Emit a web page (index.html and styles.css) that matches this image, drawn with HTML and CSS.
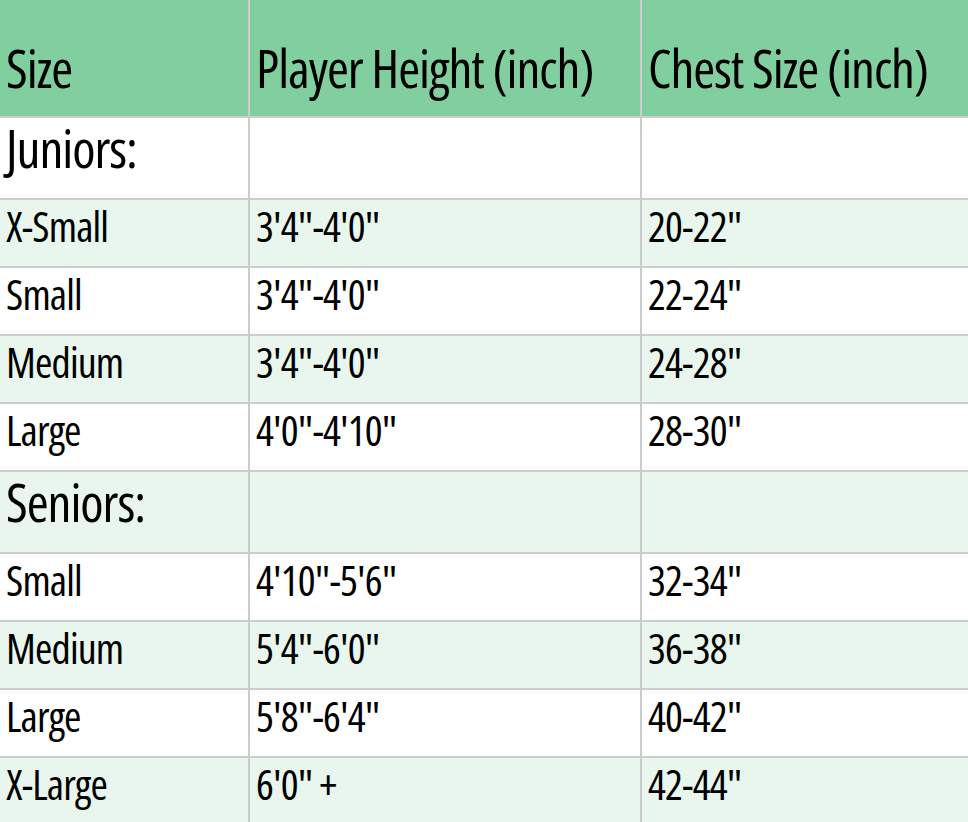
FILE: index.html
```html
<!DOCTYPE html>
<html>
<head>
<meta charset="utf-8">
<link rel="stylesheet" href="styles.css">
</head>
<body>
<div class="sheet">
  <div class="row head">
    <div class="cell"><span class="t">Size</span></div>
    <div class="cell"><span class="t">Player Height (inch)</span></div>
    <div class="cell"><span class="t">Chest Size (inch)</span></div>
  </div>
  <div class="row group">
    <div class="cell"><span class="t">Juniors:</span></div>
    <div class="cell"></div>
    <div class="cell"></div>
  </div>
  <div class="row data alt">
    <div class="cell"><span class="t">X-Small</span></div>
    <div class="cell"><span class="t">3'4"-4'0"</span></div>
    <div class="cell"><span class="t">20-22"</span></div>
  </div>
  <div class="row data">
    <div class="cell"><span class="t">Small</span></div>
    <div class="cell"><span class="t">3'4"-4'0"</span></div>
    <div class="cell"><span class="t">22-24"</span></div>
  </div>
  <div class="row data alt">
    <div class="cell"><span class="t">Medium</span></div>
    <div class="cell"><span class="t">3'4"-4'0"</span></div>
    <div class="cell"><span class="t">24-28"</span></div>
  </div>
  <div class="row data">
    <div class="cell"><span class="t">Large</span></div>
    <div class="cell"><span class="t">4'0"-4'10"</span></div>
    <div class="cell"><span class="t">28-30"</span></div>
  </div>
  <div class="row group alt">
    <div class="cell"><span class="t">Seniors:</span></div>
    <div class="cell"></div>
    <div class="cell"></div>
  </div>
  <div class="row data">
    <div class="cell"><span class="t">Small</span></div>
    <div class="cell"><span class="t">4'10"-5'6"</span></div>
    <div class="cell"><span class="t">32-34"</span></div>
  </div>
  <div class="row data alt">
    <div class="cell"><span class="t">Medium</span></div>
    <div class="cell"><span class="t">5'4"-6'0"</span></div>
    <div class="cell"><span class="t">36-38"</span></div>
  </div>
  <div class="row data">
    <div class="cell"><span class="t">Large</span></div>
    <div class="cell"><span class="t">5'8"-6'4"</span></div>
    <div class="cell"><span class="t">40-42"</span></div>
  </div>
  <div class="row data alt">
    <div class="cell"><span class="t">X-Large</span></div>
    <div class="cell"><span class="t">6'0" +</span></div>
    <div class="cell"><span class="t">42-44"</span></div>
  </div>
</div>
</body>
</html>
```
FILE: styles.css
```css
html, body {
  margin: 0;
  padding: 0;
  background: #ffffff;
}
body {
  width: 968px;
  height: 822px;
  overflow: hidden;
  font-family: "Open Sans", "Liberation Sans", sans-serif;
  font-stretch: 75%;
  font-weight: 500;
  color: #000000;
}
.sheet {
  display: flex;
  flex-direction: column;
  gap: 2px;
  background: #cccccc;
}
.row {
  display: grid;
  grid-template-columns: 248px 390px minmax(0, 1fr);
  grid-template-rows: minmax(0, 1fr);
  column-gap: 2px;
  flex: none;
}
.cell {
  display: flex;
  align-items: flex-end;
  padding: 0 6px;
  background: #ffffff;
  white-space: nowrap;
  min-width: 0;
  min-height: 0;
}
.row.alt .cell {
  background: #e8f6ed;
}
.t {
  display: inline-block;
  line-height: 1.1;
  letter-spacing: -0.02em;
}
.head {
  height: 116px;
}
.head .cell {
  background: #81cf9e;
  font-size: 53px;
  padding-bottom: 19px;
}
.group {
  height: 80px;
}
.group .cell {
  font-size: 53px;
  padding-bottom: 21px;
}
.data {
  height: 66px;
}
.data .cell {
  font-size: 42px;
  padding-bottom: 17px;
}
```
